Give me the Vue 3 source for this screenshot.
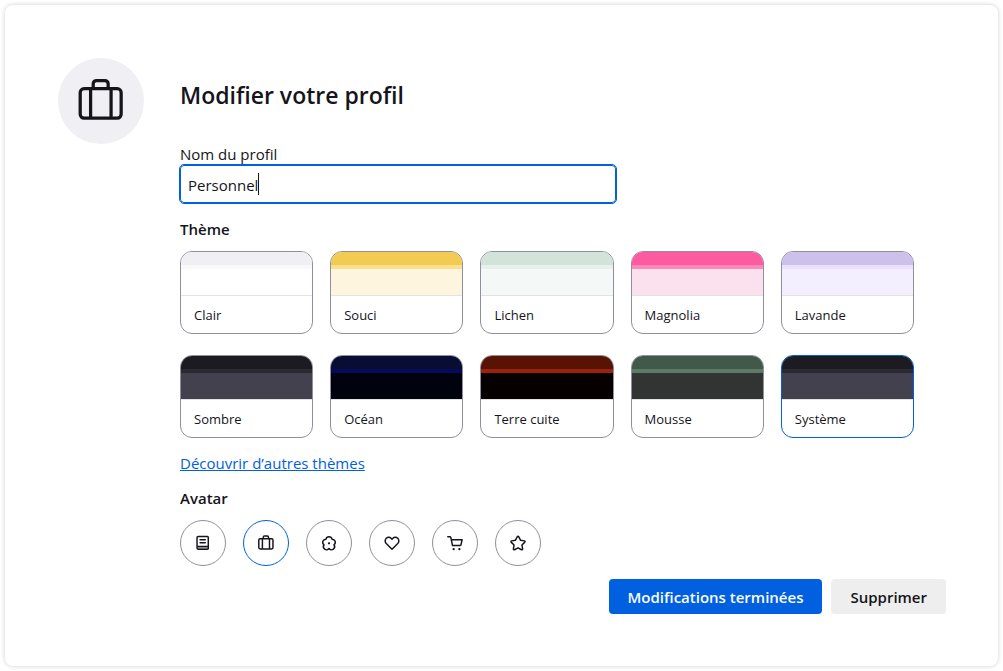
<script setup>
import { ref } from 'vue';

const profileName = ref('Personnel');
const selectedTheme = ref('systeme');
const selectedAvatar = ref('briefcase');

const themes = [
  { id: 'clair', label: 'Clair' },
  { id: 'souci', label: 'Souci' },
  { id: 'lichen', label: 'Lichen' },
  { id: 'magnolia', label: 'Magnolia' },
  { id: 'lavande', label: 'Lavande' },
  { id: 'sombre', label: 'Sombre' },
  { id: 'ocean', label: 'Océan' },
  { id: 'terre-cuite', label: 'Terre cuite' },
  { id: 'mousse', label: 'Mousse' },
  { id: 'systeme', label: 'Système' }
];

const icons = {
  book: 'M3.6 2.3H12a.7.7 0 0 1 .7.7v9.9a.7.7 0 0 1-.7.7H4a1.3 1.3 0 0 1-1.3-1.3V3.2a.9.9 0 0 1 .9-.9ZM2.8 11.1h9.8M5.4 5.2h4.6M5.4 7.7h4.6',
  briefcase: 'M2.8 4.2h10.2a1.2 1.2 0 0 1 1.2 1.2v6.7a1.2 1.2 0 0 1-1.2 1.2H2.8a1.2 1.2 0 0 1-1.2-1.2V5.4a1.2 1.2 0 0 1 1.2-1.2ZM5.6 4.2V2.7a1 1 0 0 1 1-1h2.6a1 1 0 0 1 1 1v1.5M4.8 4.2v9.1M11.1 4.2v9.1',
  flower: 'M5.3 4.6a2.75 2.75 0 0 1 5.4 0 2.75 2.75 0 0 1 1.7 5 2.75 2.75 0 0 1-4.4 3.3 2.75 2.75 0 0 1-4.4-3.3 2.75 2.75 0 0 1 1.7-5Z',
  heart: 'M8 13.6 2.9 8.5a3.3 3.3 0 0 1 0-4.7 3 3 0 0 1 4.3 0l.8.8.8-.8a3 3 0 0 1 4.3 0 3.3 3.3 0 0 1 0 4.7Z',
  shopping: 'M1.6 2.5h1.8a.9.9 0 0 1 .9.7l1.5 7.1h6.6a.9.9 0 0 0 .9-.7l1-4.5H4.8',
  star: 'M7.4 2.3a.7.7 0 0 1 1.2 0l1.6 3.2 3.5.6a.7.7 0 0 1 .4 1.1l-2.6 2.5.6 3.6a.7.7 0 0 1-1 .7L8 12.3 4.9 14a.7.7 0 0 1-1-.7l.6-3.6-2.6-2.5a.7.7 0 0 1 .4-1.1l3.5-.6Z'
};

const avatars = [
  { id: 'book', label: 'Livre' },
  { id: 'briefcase', label: 'Valise' },
  { id: 'flower', label: 'Fleur' },
  { id: 'heart', label: 'Cœur' },
  { id: 'shopping', label: 'Chariot' },
  { id: 'star', label: 'Étoile' }
];
</script>

<template>
  <main class="profile-card">
    <div class="header-avatar">
      <svg viewBox="0 0 16 16" aria-hidden="true">
        <path :d="icons[selectedAvatar]" />
      </svg>
    </div>

    <form class="profile-content" @submit.prevent>
      <h1>Modifier votre profil</h1>

      <div class="name-field">
        <label for="profile-name">Nom du profil</label>
        <div class="input-wrap">
          <input id="profile-name" v-model="profileName" type="text" autocomplete="off" spellcheck="false">
          <span class="caret" aria-hidden="true"></span>
        </div>
      </div>

      <fieldset>
        <legend>Thème</legend>
        <div class="themes">
          <label v-for="theme in themes" :key="theme.id" class="theme-card" :class="[theme.id, { selected: selectedTheme === theme.id }]">
            <input v-model="selectedTheme" type="radio" name="theme" :value="theme.id">
            <span class="frame"></span>
            <span class="toolbar"></span>
            <span class="page"></span>
            <span class="theme-name">{{ theme.label }}</span>
          </label>
        </div>
      </fieldset>

      <a class="more-themes" href="#">Découvrir d’autres thèmes</a>

      <fieldset>
        <legend>Avatar</legend>
        <div class="avatars">
          <label v-for="avatar in avatars" :key="avatar.id" class="avatar" :class="{ selected: selectedAvatar === avatar.id }">
            <input v-model="selectedAvatar" type="radio" name="avatar" :value="avatar.id" :aria-label="avatar.label">
            <svg viewBox="0 0 16 16" aria-hidden="true">
              <rect v-if="avatar.id === 'book'" class="shade" x="3.2" y="11.2" width="9" height="2.2" />
              <path :d="icons[avatar.id]" />
              <circle v-if="avatar.id === 'flower'" class="dot" cx="8" cy="8.3" r="1" />
              <template v-if="avatar.id === 'shopping'">
                <circle class="dot" cx="6.8" cy="13.5" r="1" />
                <circle class="dot" cx="11.9" cy="13.5" r="1" />
              </template>
            </svg>
          </label>
        </div>
      </fieldset>

      <div class="actions">
        <button type="submit" class="primary">Modifications terminées</button>
        <button type="button">Supprimer</button>
      </div>
    </form>
  </main>
</template>

<style>
body {
  background: #fff;
}
</style>

<style scoped>
.profile-card {
  display: flex;
  align-items: flex-start;
  gap: 36px;
  margin: 5px;
  padding: 53px 52px 52px 53px;
  border-radius: 8px;
  background: #fff;
  box-shadow: 0 0 4px rgba(58, 57, 68, 0.25);
  color: #15141a;
  font-family: 'Open Sans', 'Noto Sans', sans-serif;
  font-size: 15px;
  line-height: 20px;
}

.header-avatar {
  display: flex;
  align-items: center;
  justify-content: center;
  flex: none;
  width: 86px;
  height: 86px;
  border-radius: 50%;
  background: #f0f0f4;
}

.header-avatar svg {
  width: 52px;
  height: 52px;
}

svg {
  display: block;
}

path {
  fill: none;
  stroke: #15141a;
  stroke-width: 1;
  stroke-linejoin: round;
  stroke-linecap: round;
}

.profile-content {
  display: flex;
  flex-direction: column;
  flex: 1;
  min-width: 0;
  padding-top: 20px;
}

h1 {
  margin: 0 0 32px;
  font-size: 23px;
  font-weight: 600;
  line-height: 35px;
}

.name-field {
  display: flex;
  flex-direction: column;
  gap: 1px;
  max-width: 436px;
  margin-bottom: 16px;
}

.name-field label {
  line-height: 19px;
}

.input-wrap {
  position: relative;
  display: flex;
}

.input-wrap input {
  flex: 1;
  min-width: 0;
  height: 38px;
  box-sizing: border-box;
  padding: 2px 7px 0;
  border: 1px solid #0060df;
  border-radius: 4px;
  outline: 1px solid #0060df;
  background: #fff;
  color: inherit;
  font: inherit;
  caret-color: transparent;
}

.caret {
  position: absolute;
  top: 8px;
  left: 78px;
  width: 1px;
  height: 22px;
  background: #15141a;
}

fieldset {
  min-width: 0;
  margin: 0;
  padding: 0;
  border: 0;
}

legend {
  padding: 0 0 12px;
  font-weight: 600;
}

.themes {
  display: grid;
  grid-template-columns: repeat(5, 1fr);
  gap: 21px 17px;
  margin-right: 32px;
}

.theme-card {
  position: relative;
  display: flex;
  flex-direction: column;
  overflow: hidden;
  border: 1px solid #8f8f9d;
  border-radius: 12px;
  cursor: pointer;
}

.theme-card.selected,
.avatar.selected {
  border-color: #0060df;
}

.theme-card input,
.avatar input {
  position: absolute;
  margin: 0;
  opacity: 0;
}

.frame {
  height: 13px;
}

.toolbar {
  height: 4px;
}

.page {
  height: 26px;
  border-bottom: 1px solid #e3e3e6;
}

.theme-name {
  padding: 1px 13px 0;
  font-size: 13px;
  line-height: 36px;
}

.clair .frame { background: #f0f0f4; }
.clair .toolbar { background: #f9f9fb; }
.clair .page { background: #fff; }

.souci .frame { background: #f1cb52; }
.souci .toolbar { background: #fbdf8d; }
.souci .page { background: #fdf5dd; }

.lichen .frame { background: #d2e4da; }
.lichen .toolbar { background: #e6f1eb; }
.lichen .page { background: #f4f9f8; }

.magnolia .frame { background: #fd5b9f; }
.magnolia .toolbar { background: #ff86b9; }
.magnolia .page { background: #fbe0ed; }

.lavande .frame { background: #cdc1eb; }
.lavande .toolbar { background: #e8e0fc; }
.lavande .page { background: #f3effe; }

.sombre .frame, .systeme .frame { background: #1c1b22; }
.sombre .toolbar, .systeme .toolbar { background: #2b2a33; }
.sombre .page, .systeme .page { background: #42414d; }

.ocean .frame { background: #070d33; }
.ocean .toolbar { background: #050a5c; }
.ocean .page { background: #00030e; }

.terre-cuite .frame { background: #591305; }
.terre-cuite .toolbar { background: #9b230d; }
.terre-cuite .page { background: #060000; }

.mousse .frame { background: #405948; }
.mousse .toolbar { background: #5b7b65; }
.mousse .page { background: #323433; }

.more-themes {
  align-self: flex-start;
  margin: 15px 0;
  color: #0060df;
}

.avatars {
  display: flex;
  flex-wrap: wrap;
  gap: 17px;
}

.avatar {
  position: relative;
  display: flex;
  align-items: center;
  justify-content: center;
  width: 44px;
  height: 44px;
  border: 1px solid #8f8f9d;
  border-radius: 50%;
  cursor: pointer;
}

.avatar svg {
  width: 18px;
  height: 18px;
}

.avatar path {
  stroke-width: 1.3;
}

.dot {
  fill: #15141a;
}

.shade {
  fill: #b9b9be;
}

.actions {
  display: flex;
  justify-content: flex-end;
  gap: 9px;
  margin-top: 13px;
}

button {
  height: 35px;
  padding: 0 19px;
  border: 0;
  border-radius: 4px;
  background: #eee;
  color: inherit;
  font: inherit;
  font-weight: 600;
  cursor: pointer;
}

button.primary {
  background: #0060df;
  color: #fbfbfe;
}
</style>
